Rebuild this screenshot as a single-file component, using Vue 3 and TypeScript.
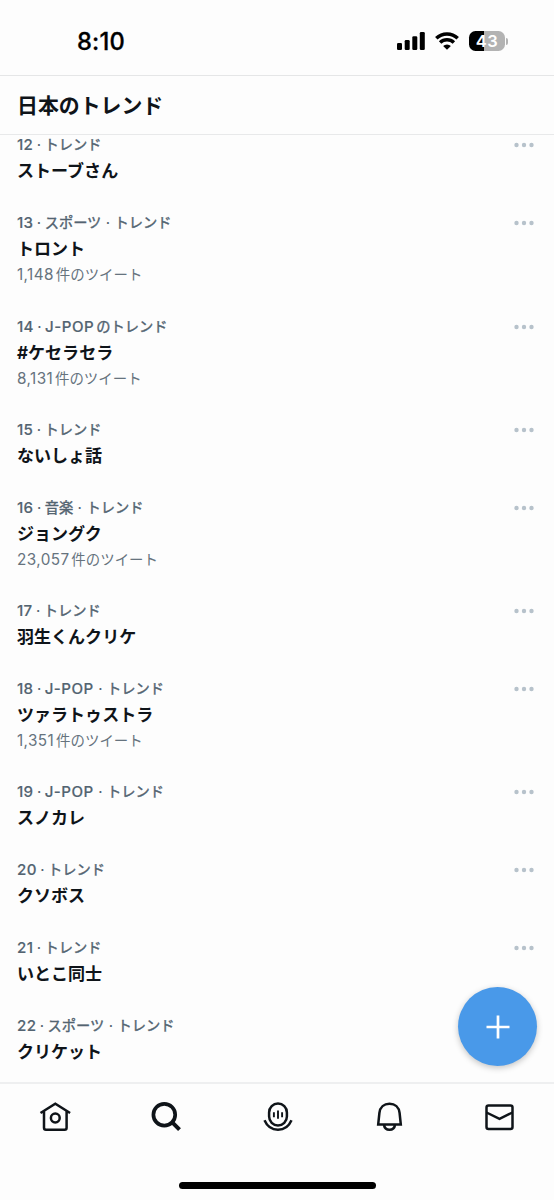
<script setup lang="ts">
interface Trend {
  rank: number
  category?: string
  latin?: string
  label: string
  title: string
  count?: string
}

const trends: Trend[] = [
  { rank: 12, label: 'トレンド', title: 'ストーブさん' },
  { rank: 13, category: 'スポーツ', label: 'トレンド', title: 'トロント', count: '1,148' },
  { rank: 14, latin: 'J-POP', label: 'のトレンド', title: '#ケセラセラ', count: '8,131' },
  { rank: 15, label: 'トレンド', title: 'ないしょ話' },
  { rank: 16, category: '音楽', label: 'トレンド', title: 'ジョングク', count: '23,057' },
  { rank: 17, label: 'トレンド', title: '羽生くんクリケ' },
  { rank: 18, latin: 'J-POP', category: '', label: 'トレンド', title: 'ツァラトゥストラ', count: '1,351' },
  { rank: 19, latin: 'J-POP', category: '', label: 'トレンド', title: 'スノカレ' },
  { rank: 20, label: 'トレンド', title: 'クソボス' },
  { rank: 21, label: 'トレンド', title: 'いとこ同士' },
  { rank: 22, category: 'スポーツ', label: 'トレンド', title: 'クリケット' },
]
</script>

<template>
  <div class="screen">
    <header class="status">
      <span class="time">8:10</span>
      <div class="indicators">
        <svg class="signal" width="28" height="18" viewBox="0 0 28 18">
          <rect x="0" y="11" width="5" height="7" rx="1.3" />
          <rect x="7.7" y="8" width="5" height="10" rx="1.3" />
          <rect x="15.3" y="4.300" width="5" height="13.700" rx="1.3" />
          <rect x="22.800" y="0" width="5" height="18" rx="1.3" />
        </svg>
        <svg class="wifi" width="24" height="18" viewBox="0 0 24 18">
          <path d="M1.300 6.300a15.300 15.300 0 0 1 21.400 0M5.100 10.600a9.900 9.900 0 0 1 13.800 0" fill="none" stroke="#000" stroke-width="3.500" />
          <path d="M12 17.800l-3.900-3.700a5.700 5.700 0 0 1 7.800 0z" />
        </svg>
        <div class="battery"><span>43</span></div>
        <i class="cap"></i>
      </div>
    </header>
    <h1 class="heading">日本のトレンド</h1>
    <main class="list">
      <article v-for="t in trends" :key="t.rank" class="trend" :class="{ counted: t.count }">
        <div class="meta">
          <span class="latin">{{ t.rank }}</span><span class="dot narrow">·</span>
          <span v-if="t.latin" class="latin brand">{{ t.latin }}</span>
          <template v-if="t.category !== undefined"><span v-if="t.category" class="kana">{{ t.category }}</span><span class="dot wide">·</span></template>
          <span class="kana">{{ t.label }}</span>
        </div>
        <div class="title">{{ t.title }}</div>
        <div v-if="t.count" class="count"><span class="num">{{ t.count }}</span><span class="unit">件のツイート</span></div>
        <svg v-if="t.rank !== 22" class="more" width="20" height="6" viewBox="0 0 20 6">
          <circle cx="2.500" cy="3" r="2.200" /><circle cx="10" cy="3" r="2.200" /><circle cx="17.500" cy="3" r="2.200" />
        </svg>
      </article>
      <button class="compose" aria-label="+">
        <svg width="24" height="24" viewBox="0 0 24 24"><path d="M12 .5v23M.5 12h23" stroke="#fff" stroke-width="2.700" /></svg>
      </button>
    </main>
    <nav class="tabs">
      <svg viewBox="0 0 36 36">
        <path d="M3.500 14 18.300 4.700l14.800 9.300M7 12.500v16.300q0 2 2 2h18.600q2 0 2-2V12.500" />
        <circle cx="18.300" cy="19" r="4.400" />
      </svg>
      <svg viewBox="0 0 36 36"><circle cx="16.300" cy="15.700" r="10.900" stroke-width="3.700" /><path d="m24 23.200 7.500 7.500" stroke-width="4" /></svg>
      <svg viewBox="0 0 36 36">
        <rect x="10.100" y="4.600" width="17.800" height="21.800" rx="8.900" />
        <path d="M5.500 21.200C10.900 33.800 27.100 33.800 32.500 21.200" />
        <path d="M14.900 13.200v5M19 11.400v8.300M23.100 13.200v5" stroke-width="1.900" />
      </svg>
      <svg viewBox="0 0 36 36"><path d="M8.200 25.400 9.400 14C10 8.200 14.100 4.700 19.500 4.700S29 8.200 29.600 14l1.200 11.400zM14 26c.5 3.300 2.600 4.700 5.500 4.700s5-1.400 5.500-4.700" /></svg>
      <svg viewBox="0 0 36 36"><rect x="5.500" y="6.500" width="26" height="23.500" rx="2" /><path d="m5.500 13.500 13 6.300 13-6.300" /></svg>
    </nav>
    <footer class="home"><i></i></footer>
  </div>
</template>

<style>
body { margin: 0; background: #fdfdfd; }
</style>

<style scoped>
* { box-sizing: border-box; }
.screen { width: 554px; height: 1200px; overflow: hidden; display: flex; flex-direction: column; background: #fdfdfd; color: #0f1419; font-family: Inter, "Noto Sans CJK JP", sans-serif; }
.status { height: 76px; flex: none; display: flex; align-items: flex-start; justify-content: space-between; padding: 0 46px 0 77px; border-bottom: 1px solid #e5e6e7; }
.time { margin-top: 26px; line-height: 32px; font-size: 23.700px; font-weight: 500; -webkit-text-stroke: .3px #000; color: #000; letter-spacing: .2px; }
.indicators { display: flex; align-items: center; margin-top: 31px; height: 20px; }
.wifi { margin-left: 10px; }
.battery { margin-left: 10px; width: 36px; height: 20px; border-radius: 6.500px; background: linear-gradient(90deg, #000 43%, #b3b3b3 43%); color: #fff; text-align: center; font-size: 16.500px; line-height: 20px; font-weight: 600; letter-spacing: .4px; }
.cap { width: 2px; height: 7px; margin-left: 1px; border-radius: 0 3px 3px 0; background: #b3b3b3; }
.heading { height: 59px; flex: none; margin: 0; padding-left: 17px; border-bottom: 1px solid #e8e9ea; font: 700 20.900px/56px "Noto Sans CJK JP", sans-serif; }
.list { position: relative; flex: none; height: 947px; padding-top: .4px; }
.trend { position: relative; height: 78px; padding-left: 17px; }
.trend.counted { height: 103.150px; }
.meta { display: flex; height: 20px; line-height: 20px; font-size: 14.250px; font-weight: 500; color: #536471; white-space: nowrap; }
.latin { font-size: 15.100px; letter-spacing: .35px; -webkit-text-stroke: .15px #536471; }
.brand { letter-spacing: .5px; }
.kana { line-height: 18px; font-family: "Noto Sans CJK JP", sans-serif; font-weight: 400; -webkit-text-stroke: .4px #536471; }
.brand + .kana { margin-left: 2px; }
.dot { text-align: center; }
.narrow { width: 11.200px; }
.wide { width: 13.200px; }
.title { height: 32px; line-height: 32px; font-size: 17.050px; font-weight: 700; white-space: nowrap; }
.count { display: flex; height: 20px; line-height: 20px; font-size: 14.450px; color: #66737e; white-space: nowrap; }
.num { margin-right: 1.900px; font-size: 15.300px; letter-spacing: .4px; }
.unit { line-height: 19px; }
.more { position: absolute; right: 20px; top: 7px; fill: #b7c2cb; }
.compose { position: absolute; right: 17px; bottom: 16px; width: 79px; height: 79px; display: grid; place-items: center; padding: 0; border: 0; border-radius: 50%; background: #4999e9; box-shadow: 0 2px 6px rgba(0, 0, 0, .23); }
.tabs { height: 70px; flex: none; display: flex; justify-content: space-between; padding: 0 37px; border-top: 2px solid #eeeff0; }
.tabs svg { width: 36px; height: 36px; margin-top: 14.500px; fill: none; stroke: #0f1419; stroke-width: 2.500; }
.home { display: flex; justify-content: center; padding-top: 29.500px; }
.home i { width: 197px; height: 7px; border-radius: 4px; background: #000; }
</style>
